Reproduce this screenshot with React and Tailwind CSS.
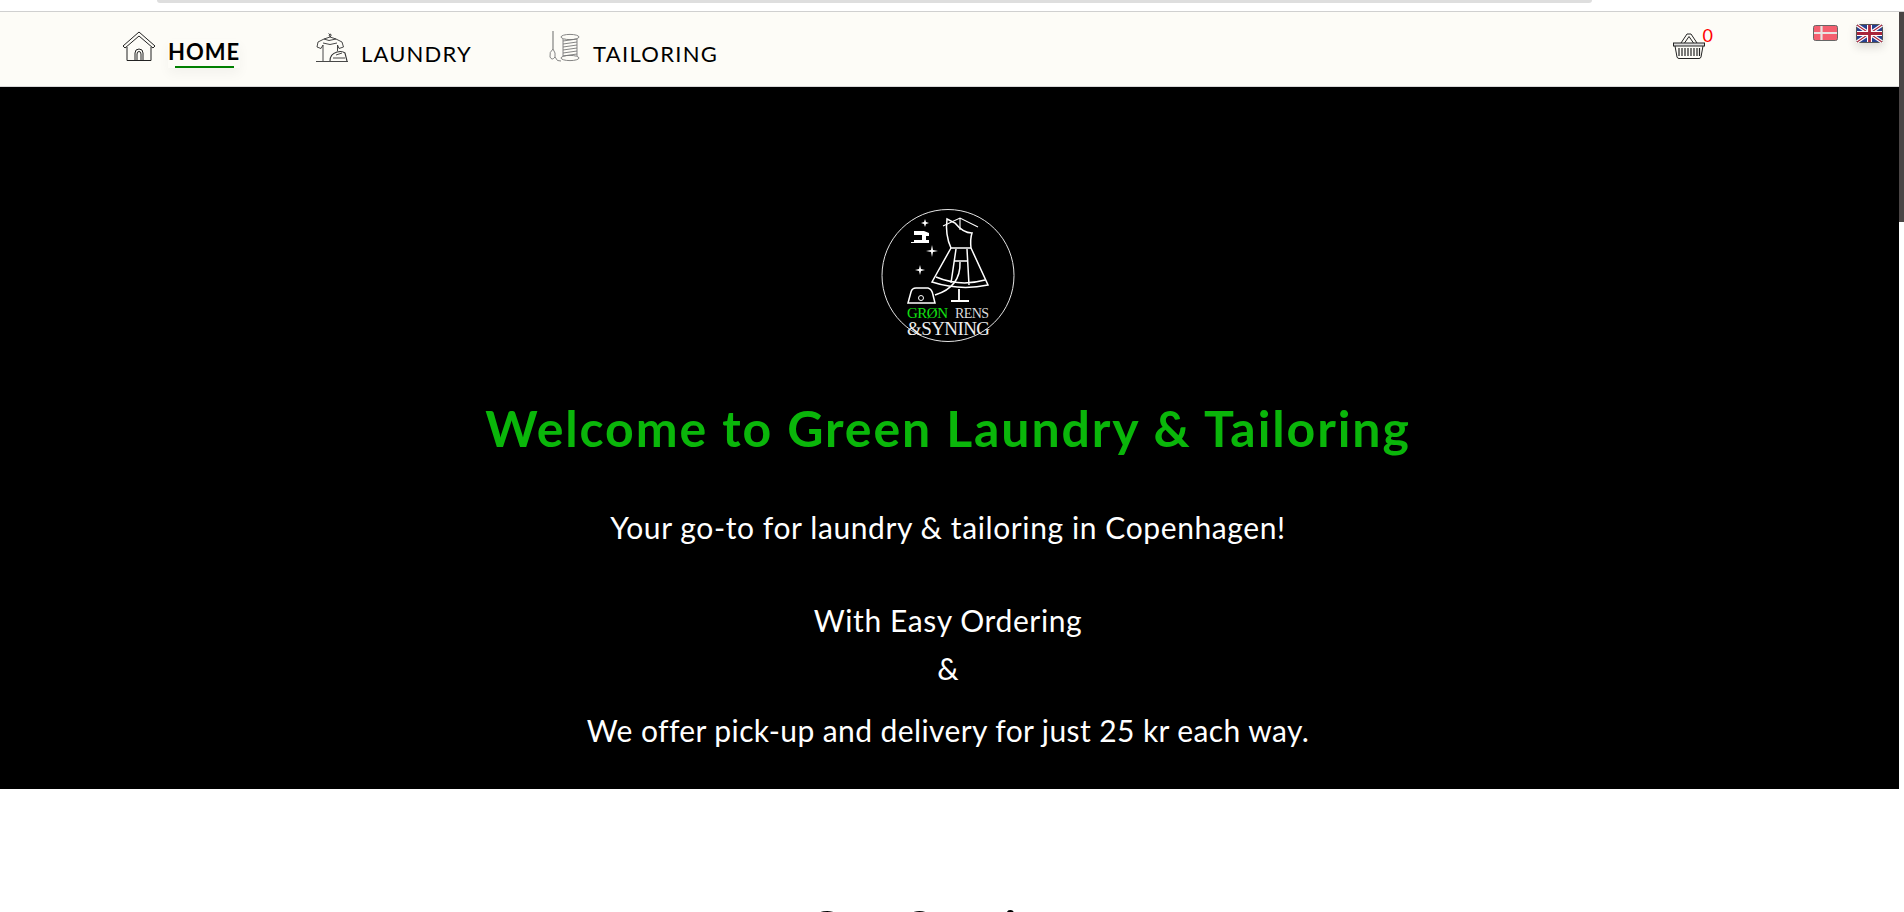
import React from "react";

function HomeIcon() {
  return (
    <svg viewBox="0 0 34 31" className="w-[34px] h-[31px]" fill="none" stroke="#222" strokeWidth="1">
      <path d="M1 15 L17 1 L33 15 L31 17 L17 5 L3 17 Z" />
      <path d="M5 16 V29.5 H29 V16" />
      <path d="M13 29.5 V22 Q13 18 17 18 Q21 18 21 22 V29.5" />
      <path d="M15 29.5 V23 Q15 20.5 17 20.5 Q19 20.5 19 23 V29.5" />
    </svg>
  );
}

function LaundryIcon() {
  return (
    <svg viewBox="0 0 32 30" className="w-[32px] h-[30px]" fill="none" stroke="#333" strokeWidth="0.9">
      <path d="M14 5 Q14 1.5 12.5 1.5 M13 3.5 Q14 1 15 2.5 Q15.5 4 14 5 L8 7 L13 8.5 L20 7 L14 5" />
      <path d="M8 7 L2 10 L1 15 L5 16.5 L7 13 V25 M20 7 L26 10 L27.5 15 L23 16.5 L21.5 13 V19" />
      <path d="M7 11 Q14 14 21 11" />
      <path d="M7 29 V25" />
      <path d="M0 29.5 H32" />
      <path d="M14 29 Q14 22 21 20 Q26 18.5 29 21 L31 29" strokeWidth="1.1" />
      <path d="M17 26 H29 M20 23 L26 21" />
    </svg>
  );
}

function SpoolIcon() {
  return (
    <svg viewBox="0 0 31 31" className="w-[31px] h-[31px]" fill="none" stroke="#777" strokeWidth="0.9">
      <path d="M4 0 V18" strokeWidth="1.1" />
      <path d="M4 18 Q0 21 1 26 Q3 30 6 26 Q7 22 4 18 M6 26 Q8 31 12 30" />
      <ellipse cx="21" cy="6" rx="9" ry="2.6" />
      <ellipse cx="21" cy="27" rx="9" ry="2.6" />
      <path d="M14 8 V25 M28 8 V25" />
      <path d="M14 10 L28 8 M14 13 L28 11 M14 16 L28 14 M14 19 L28 17 M14 22 L28 20 M14 25 L28 23" />
    </svg>
  );
}

function BasketIcon() {
  return (
    <svg viewBox="0 0 32 26" className="w-[32px] h-[26px]" fill="none" stroke="#222" strokeWidth="1">
      <path d="M8 10 L14 1 H18 L24 10 M11.5 10 L16 3.5 L20.5 10" />
      <rect x="0.5" y="10" width="31" height="3" fill="#ddd" />
      <path d="M2 13 L4 24 Q4.5 25.5 6 25.5 H26 Q27.5 25.5 28 24 L30 13" />
      <path d="M6 15 V23 M9 15 V23 M12 15 V23 M15 15 V23 M18 15 V23 M21 15 V23 M24 15 V23 M26.5 15 V23" strokeWidth="1.2" />
    </svg>
  );
}

function DanishFlag() {
  return (
    <svg viewBox="0 0 25 16" className="w-[25px] h-[16px]">
      <rect x="0.5" y="0.5" width="24" height="15" rx="2" fill="#f45f6f" stroke="#666" />
      <path d="M8.5 1 V15 M1 8 H24" stroke="#e8e4e2" strokeWidth="2.2" />
    </svg>
  );
}

function UkFlag() {
  return (
    <svg viewBox="0 0 27 19" className="w-[27px] h-[19px]">
      <rect x="0.5" y="0.5" width="26" height="18" rx="2" fill="#27408f" stroke="#555" />
      <path d="M1 1 L26 18 M26 1 L1 18" stroke="#fff" strokeWidth="3.4" />
      <path d="M1 1 L26 18 M26 1 L1 18" stroke="#a8243a" strokeWidth="1.1" />
      <path d="M13.5 1 V18 M1 9.5 H26" stroke="#fff" strokeWidth="5" />
      <path d="M13.5 1 V18 M1 9.5 H26" stroke="#a8243a" strokeWidth="2.8" />
    </svg>
  );
}

function Sparkle({ x, y, r }) {
  return (
    <path
      d={`M${x} ${y - r} L${x + 1} ${y - 1} L${x + r} ${y} L${x + 1} ${y + 1} L${x} ${y + r} L${x - 1} ${y + 1} L${x - r} ${y} L${x - 1} ${y - 1} Z`}
      fill="#fff"
      stroke="none"
    />
  );
}

function Logo() {
  return (
    <svg viewBox="0 0 176 160" className="w-[176px] h-[160px] block" fill="none" stroke="#fff" strokeWidth="1.5">
      <circle cx="88" cy="80.5" r="66" stroke="#e5e5e5" strokeWidth="1" />
      {/* sewing machine */}
      <path d="M51 48 H69 V45 H66 V41 H69 V38 L64 36 H54 V40 H62 V45 H54 V47 H51 Z" fill="#fff" stroke="none" />
      <Sparkle x={65} y={28} r={4} />
      <Sparkle x={72} y={56} r={6} />
      <Sparkle x={60} y={75} r={5} />
      {/* dress */}
      <path d="M83 31 L100 23 L118 32 M100 23 L100 35" strokeWidth="1.1" />
      <path d="M87 24 Q85 40 91 53 H111 Q110 44 112 38 Q103 38 95 28 Z" />
      <path d="M91 53 L72 87 Q100 96 128 90 L111 53" />
      <path d="M76 82 Q100 92 125 85 M96 54 L91 88 M107 54 L109 90" />
      <path d="M94 66 H107 M100 67 Q101 92 75 100" />
      <path d="M99 94 V105 M91 106 H109" strokeWidth="1.8" />
      <path d="M48 108 L51 97 Q52 93 56 93 H68 Q72 94 73 100 L75 108 Z" />
      <circle cx="61" cy="103" r="2.5" strokeWidth="1" />
      <text x="47" y="123" textLength="41" fontFamily="'Liberation Serif', serif" fontSize="15" stroke="none" fill="#12e012">GRØN</text>
      <text x="95" y="123" textLength="34" fontFamily="'Liberation Serif', serif" fontSize="14" stroke="none" fill="#ddd">RENS</text>
      <text x="47" y="140" textLength="83" fontFamily="'Liberation Serif', serif" fontSize="19" stroke="none" fill="#eee">&amp;SYNING</text>
    </svg>
  );
}

export default function App() {
  return (
    <div className="h-[912px] overflow-hidden bg-white font-['Lato',sans-serif]">
      {/* top strip */}
      <div className="h-[12px] border-b border-[#d0d0d0] bg-white">
        <div className="ml-[157px] w-[1435px] h-[3px] rounded-b-lg bg-[#dedede]"></div>
      </div>

      <div className="flex">
        <div className="flex-1 min-w-0">
          {/* Nav */}
          <nav className="h-[75px] flex bg-[#fdfcf7] border-b border-[#d8d8d8] pl-[122px] pr-[16px]">
            <div className="flex items-start pt-[19px] gap-[12px] w-[194px]">
              <HomeIcon />
              <div className="flex flex-col items-center mt-[8px] shadow-[0_6px_12px_rgba(0,0,0,0.04)]">
                <span className="text-[22px] leading-[26px] font-bold tracking-[1px] text-black">HOME</span>
                <span className="w-[59px] h-[2px] bg-[#008000] mt-[1px]"></span>
              </div>
            </div>
            <div className="flex items-start pt-[20px] gap-[13px] w-[233px]">
              <LaundryIcon />
              <span className="text-[22px] leading-[26px] mt-[9px] tracking-[1.2px] text-black">LAUNDRY</span>
            </div>
            <div className="flex items-start pt-[19px] gap-[13px]">
              <SpoolIcon />
              <span className="text-[22px] leading-[26px] mt-[10px] tracking-[1.3px] text-black">TAILORING</span>
            </div>
            <div className="flex-1"></div>
            <div className="flex items-start pt-[21px] mr-[100px]">
              <BasketIcon />
              <span className="text-[18px] leading-[18px] text-[#ff0000] -ml-[2px] -mt-[7px]">0</span>
            </div>
            <div className="flex items-start gap-[18px] pt-[12px]">
              <div className="mt-[1px]"><DanishFlag /></div>
              <div className="shadow-[0_4px_10px_rgba(0,0,0,0.15)] h-[19px]"><UkFlag /></div>
            </div>
          </nav>

          {/* Hero */}
          <section className="h-[702px] bg-black pr-[3px] flex flex-col items-center pt-[108px] text-white text-center">
            <Logo />
            <h1 className="mt-[43px] text-[50px] leading-[60px] font-bold text-[#0ab60a] tracking-[1.9px]">
              Welcome to Green Laundry &amp; Tailoring
            </h1>
            <p className="mt-[49px] text-[30px] leading-[40px] tracking-[0.6px]">Your go-to for laundry &amp; tailoring in Copenhagen!</p>
            <p className="mt-[53px] text-[30px] leading-[40px] tracking-[0.6px]">With Easy Ordering</p>
            <p className="mt-[8px] text-[30px] leading-[40px]">&amp;</p>
            <p className="mt-[22px] text-[30px] leading-[40px] tracking-[0.4px]">We offer pick-up and delivery for just 25 kr each way.</p>
          </section>

          <section className="pr-[3px] pt-[109px] text-center">
            <h2 className="text-[50px] leading-[60px] font-bold text-black">Our Services</h2>
          </section>
        </div>

        {/* scrollbar */}
        <div className="w-[5px] shrink-0 bg-white">
          <div className="h-[210px] bg-[#4a4545]"></div>
        </div>
      </div>
    </div>
  );
}
